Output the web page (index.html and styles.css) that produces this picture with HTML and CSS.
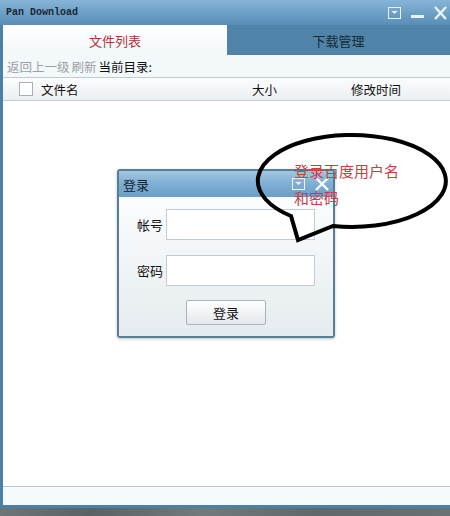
FILE: index.html
```html
<!DOCTYPE html>
<html lang="zh-CN">
<head>
  <meta charset="UTF-8">
  <meta name="viewport" content="width=device-width, initial-scale=1.0">
  <title>Pan Download</title>
  <link rel="stylesheet" href="styles.css">
</head>
<body>
  <!-- Ventana principal -->
  <div class="window">
    <div class="titlebar">
      <span class="title">Pan Download</span>
      <div class="controls">
        <svg width="13" height="12" viewBox="0 0 13 12"><rect x="0.5" y="0.5" width="12" height="11" fill="none" stroke="#eaf3f9"/><path d="M3.5 4 L9.5 4 L6.5 7 Z" fill="#eaf3f9"/></svg>
        <svg width="13" height="12" viewBox="0 0 13 12"><rect x="0" y="8" width="13" height="3" fill="#eaf3f9"/></svg>
        <svg width="13" height="14" viewBox="0 0 13 14"><path d="M1 1 L12 13 M12 1 L1 13" stroke="#eaf3f9" stroke-width="2.4"/></svg>
      </div>
    </div>
    <div class="frame">
      <div class="tabs">
        <div class="tab active">文件列表</div>
        <div class="tab">下载管理</div>
      </div>
      <div class="toolbar">
        <span class="link">返回上一级</span>
        <span class="link">刷新</span>
        <span>当前目录:</span>
      </div>
      <div class="list-head">
        <span class="check"></span>
        <span class="col-name">文件名</span>
        <span class="col-size">大小</span>
        <span class="col-time">修改时间</span>
      </div>
      <div class="list"></div>
      <div class="statusbar"></div>
    </div>
  </div>
  <div class="wallpaper"></div>

  <!-- Diálogo de login -->
  <div class="dialog">
    <div class="dialog-title">
      <span>登录</span>
      <div class="controls">
        <svg width="13" height="12" viewBox="0 0 13 12"><rect x="0.5" y="0.5" width="12" height="11" fill="none" stroke="#eaf3f9"/><path d="M3.5 4 L9.5 4 L6.5 7 Z" fill="#eaf3f9"/></svg>
        <svg width="14" height="14" viewBox="0 0 14 14"><path d="M1 1 L13 13 M13 1 L1 13" stroke="#ffffff" stroke-width="2.4"/></svg>
      </div>
    </div>
    <div class="dialog-body">
      <div class="field">
        <label for="user">帐号</label>
        <input type="text" id="user">
      </div>
      <div class="field">
        <label for="pass">密码</label>
        <input type="password" id="pass">
      </div>
      <button class="btn">登录</button>
    </div>
  </div>

  <!-- Bocadillo de anotación -->
  <svg class="bubble" width="450" height="516" viewBox="0 0 450 516">
    <path d="M291 216 A94 46 0 1 1 333 226 L298 240 Z" fill="none" stroke="#000" stroke-width="4" stroke-linejoin="miter"/>
  </svg>
  <div class="bubble-text">登录百度用户名<br>和密码</div>
</body>
</html>
```

FILE: styles.css
```css
body {
  margin: 0;
  width: 450px;
  height: 516px;
  overflow: hidden;
  position: relative;
  background: #656c6f;
  font-family: "Noto Sans CJK SC", "Noto Sans", sans-serif;
  font-size: 12.5px;
  color: #111;
}
.window {
  height: 508px;
  display: flex;
  flex-direction: column;
}
.titlebar {
  height: 25px;
  flex: none;
  display: flex;
  align-items: center;
  justify-content: space-between;
  background: linear-gradient(#86b4d6, #6c9fc6 55%, #5a8db5);
  padding: 0 3px 0 6px;
}
.title {
  font-family: "Liberation Mono", monospace;
  font-size: 10px;
  font-weight: bold;
  color: #1a2630;
  margin-top: -1px;
}
.controls {
  display: flex;
  align-items: center;
  gap: 10px;
}
.frame {
  flex: 1;
  display: flex;
  flex-direction: column;
  border-left: 3px solid #4d80a5;
  border-bottom: 3px solid #4d80a5;
  background: #fff;
}
.tabs {
  height: 30px;
  flex: none;
  display: flex;
  background: #4f83a7;
}
.tab {
  flex: 1;
  display: flex;
  align-items: center;
  justify-content: center;
  font-size: 13px;
  color: #152a38;
}
.tab.active {
  flex: none;
  width: 224px;
  background: linear-gradient(#ffffff, #f3f7f9);
  color: #b83038;
}
.toolbar {
  height: 22px;
  flex: none;
  display: flex;
  align-items: center;
  gap: 2px;
  padding-left: 4px;
  background: #f3f8fa;
}
.link {
  color: #9a9fa3;
}
.list-head {
  height: 24px;
  flex: none;
  box-sizing: border-box;
  display: flex;
  align-items: center;
  border-top: 1px solid #c3c9ce;
  border-bottom: 1px solid #c6ccd1;
  background: linear-gradient(#fbfcfd, #eceff2);
}
.check {
  width: 12px;
  height: 12px;
  margin-left: 16px;
  border: 1px solid #a7afb6;
  background: #fff;
}
.col-name {
  margin-left: 8px;
  width: 211px;
}
.col-size {
  width: 99px;
}
.list {
  flex: 1;
  background: #fff;
}
.statusbar {
  height: 19px;
  flex: none;
  box-sizing: border-box;
  border-top: 1px solid #b7c6d0;
  background: #f5fafc;
}
.wallpaper {
  height: 8px;
  background: linear-gradient(90deg, #6e7578, #5b6265 20%, #737a7c 45%, #61686b 70%, #6a7174);
}
.dialog {
  position: absolute;
  left: 117px;
  top: 169px;
  width: 218px;
  height: 169px;
  box-sizing: border-box;
  border: 2px solid #567e94;
  border-radius: 3px;
  display: flex;
  flex-direction: column;
  box-shadow: 0 1px 3px rgba(0, 0, 0, 0.25);
}
.dialog-title {
  height: 26px;
  flex: none;
  display: flex;
  align-items: center;
  justify-content: space-between;
  padding: 0 4px 0 4px;
  background: linear-gradient(#a3c6e1, #7eaed3 50%, #6b9fc7);
  color: #14222c;
  font-size: 13px;
}
.dialog-body {
  flex: 1;
  display: flex;
  flex-direction: column;
  align-items: center;
  gap: 15px;
  padding-top: 12px;
  background: linear-gradient(#fbfdfe, #e5ebee);
}
.field {
  display: flex;
  align-items: center;
  gap: 3px;
}
.field label {
  width: 26px;
  font-size: 13px;
}
.field input {
  width: 149px;
  height: 31px;
  box-sizing: border-box;
  border: 1px solid #c3ccd3;
  background: #fff;
  margin: 0;
}
.btn {
  width: 80px;
  height: 25px;
  margin-top: -1px;
  border: 1px solid #a8b2ba;
  border-radius: 2px;
  background: linear-gradient(#ffffff, #e4e8ec);
  font-family: inherit;
  font-size: 13px;
  color: #111;
}
.bubble {
  position: absolute;
  left: 0;
  top: 0;
}
.bubble-text {
  position: absolute;
  left: 294px;
  top: 157px;
  font-size: 15px;
  line-height: 27px;
  color: #cc3c44;
}
```
